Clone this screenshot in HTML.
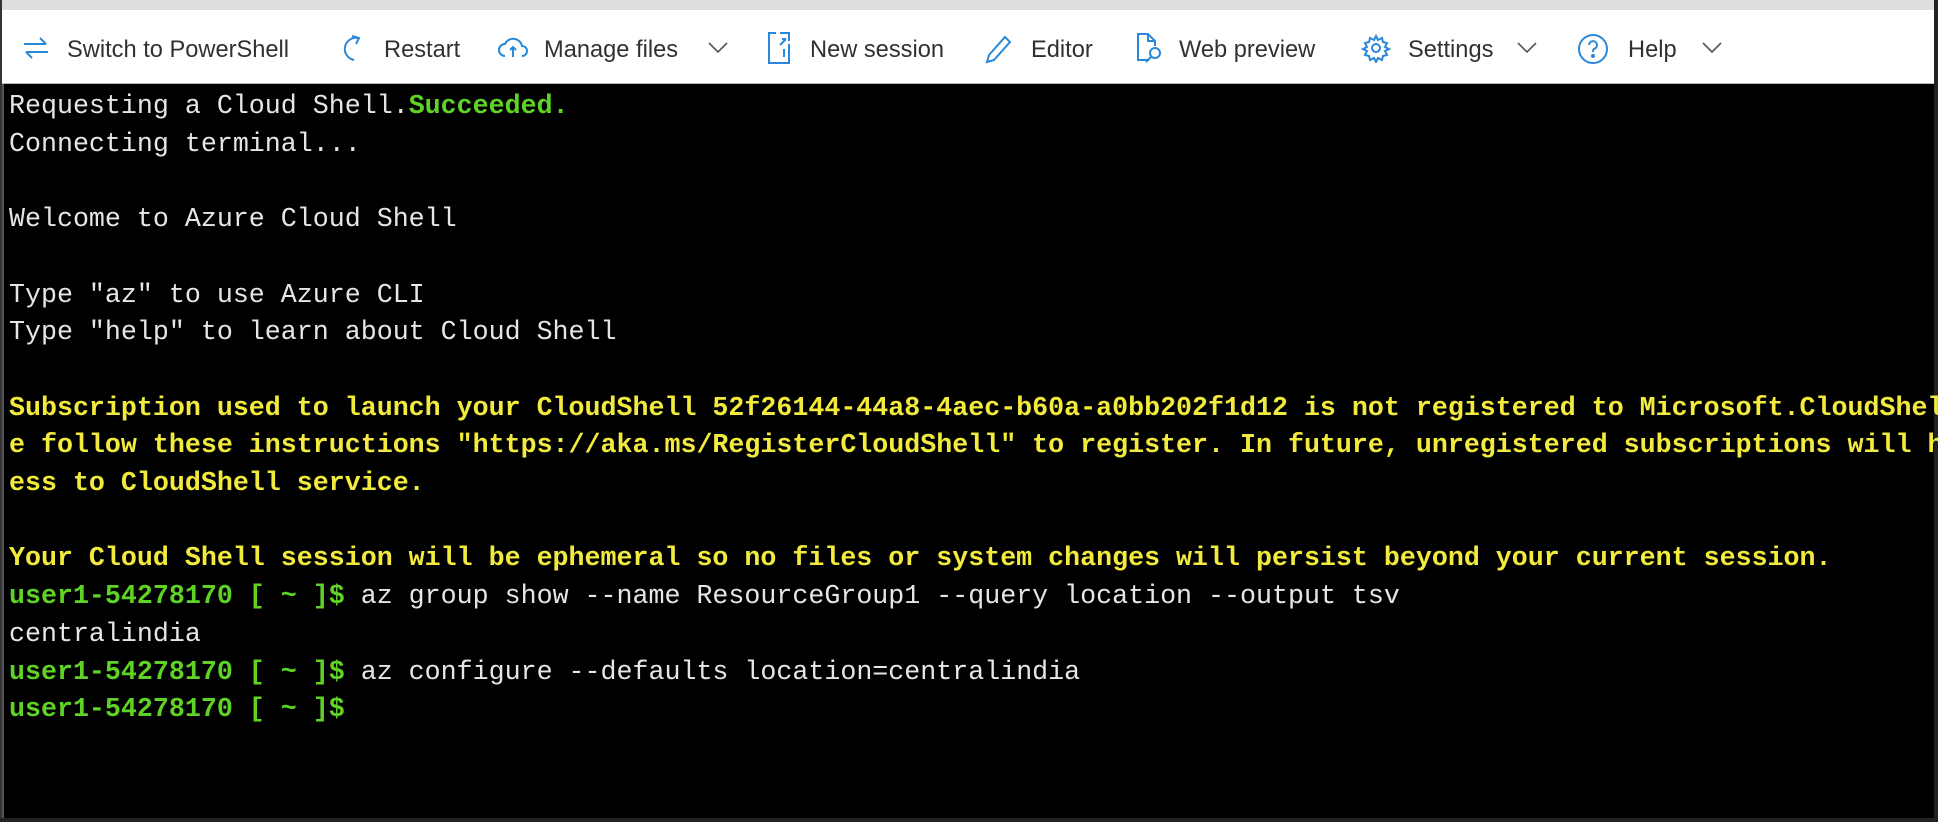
<!DOCTYPE html>
<html><head><meta charset="utf-8"><style>
html,body{margin:0;padding:0;width:1938px;height:822px;overflow:hidden;background:#fff}
.top{position:absolute;left:0;top:0;width:1938px;height:10px;background:#dddcdf}
.tb{position:absolute;left:0;top:10px;width:1938px;height:73px;background:#fff;border-bottom:1px solid #bbb}
.t{position:absolute;top:35px;font:24px "Liberation Sans",sans-serif;color:#323130;white-space:nowrap;line-height:30px;transform:scaleX(0.985);transform-origin:left center}
.ic{position:absolute;top:34px}
.term{position:absolute;left:2px;top:84px;width:1932px;height:734px;background:#000;border-left:2px solid #555;}
.bl{position:absolute;left:0;top:0;width:2px;height:822px;background:#333}
.br{position:absolute;right:0;top:0;width:4px;height:822px;background:#222}
.bb{position:absolute;left:0;bottom:0;width:1938px;height:4px;background:#222}
pre{margin:0;position:absolute;left:9px;top:89px;font:26.65px/37.7px "Liberation Mono",monospace;color:#e6e6e6;white-space:pre}
.g{color:#5fd325;font-weight:bold}
.y{color:#f2ea3c;font-weight:bold}
</style></head><body>
<div class="top"></div>
<div class="tb"></div>
<svg class="ic" style="left:22px" width="28" height="28" viewBox="0 0 28 28" fill="none" stroke="#2b88d8" stroke-width="2"><path d="M2 10h22M18 4l6 6M26 18H4M10 24l-6-6"/></svg>
<div class="t" style="left:67px">Switch to PowerShell</div>
<svg class="ic" style="left:340px" width="28" height="30" viewBox="0 0 28 30" fill="none" stroke="#2b88d8" stroke-width="2"><path d="M18 4a11 11 0 1 0-4 22"/><path d="M12 2l7 2-3 6"/></svg>
<div class="t" style="left:384px">Restart</div>
<svg class="ic" style="left:497px" width="32" height="28" viewBox="0 0 32 28" fill="none" stroke="#2b88d8" stroke-width="2"><path d="M8 22a6 6 0 0 1 0-12 9 9 0 0 1 17 2 5 5 0 0 1 0 10"/><path d="M13 16l3-3 3 3M16 13v10"/></svg>
<div class="t" style="left:544px">Manage files</div>
<svg class="ic" style="left:707px;top:41px" width="22" height="14" viewBox="0 0 22 14" fill="none" stroke="#555" stroke-width="1.6"><path d="M2 2l9 9 9-9"/></svg>
<svg class="ic" style="left:766px;top:31px" width="28" height="34" viewBox="0 0 28 34" fill="none" stroke="#2b88d8" stroke-width="2"><path d="M10 2H3v30h20V13M14 2h9v8M14 14l6-6M20 8h-4M18 18v8"/></svg>
<div class="t" style="left:810px">New session</div>
<svg class="ic" style="left:985px" width="28" height="30" viewBox="0 0 28 30" fill="none" stroke="#2b88d8" stroke-width="2"><path d="M20 3l5 5L9 26l-7 2 2-7z"/></svg>
<div class="t" style="left:1031px">Editor</div>
<svg class="ic" style="left:1135px;top:32px" width="30" height="32" viewBox="0 0 30 32" fill="none" stroke="#2b88d8" stroke-width="2"><path d="M14 28H3V2h10l7 7v5M13 2v7h7"/><circle cx="20" cy="21" r="5"/><path d="M16 25l-5 5"/></svg>
<div class="t" style="left:1179px">Web preview</div>
<svg class="ic" style="left:1361px;top:33px" width="30" height="30" viewBox="0 0 30 30" fill="none" stroke="#2b88d8" stroke-width="2"><circle cx="15" cy="15" r="4"/><path d="M15 3l2 4 4-2 1 4 4 1-2 4 4 2-4 2 2 4-4 1-1 4-4-2-2 4-2-4-4 2-1-4-4-1 2-4-4-2 4-2-2-4 4-1 1-4 4 2z"/></svg>
<div class="t" style="left:1408px">Settings</div>
<svg class="ic" style="left:1516px;top:41px" width="22" height="14" viewBox="0 0 22 14" fill="none" stroke="#555" stroke-width="1.6"><path d="M2 2l9 9 9-9"/></svg>
<svg class="ic" style="left:1577px;top:33px" width="32" height="32" viewBox="0 0 32 32" fill="none" stroke="#2b88d8" stroke-width="2"><circle cx="16" cy="16" r="14"/><path d="M12 12a4 4 0 1 1 5 4c-1 .5-1 1.5-1 3"/><circle cx="16" cy="23" r="1" fill="#2b88d8"/></svg>
<div class="t" style="left:1628px">Help</div>
<svg class="ic" style="left:1701px;top:41px" width="22" height="14" viewBox="0 0 22 14" fill="none" stroke="#555" stroke-width="1.6"><path d="M2 2l9 9 9-9"/></svg>
<div class="term"></div>
<div class="bl"></div><div class="br"></div><div class="bb"></div>
<pre>Requesting a Cloud Shell.<span class="g">Succeeded.</span>
Connecting terminal...

Welcome to Azure Cloud Shell

Type "az" to use Azure CLI
Type "help" to learn about Cloud Shell

<span class="y">Subscription used to launch your CloudShell 52f26144-44a8-4aec-b60a-a0bb202f1d12 is not registered to Microsoft.CloudShel</span>
<span class="y">e follow these instructions "https://aka.ms/RegisterCloudShell" to register. In future, unregistered subscriptions will h</span>
<span class="y">ess to CloudShell service.</span>

<span class="y">Your Cloud Shell session will be ephemeral so no files or system changes will persist beyond your current session.</span>
<span class="g">user1-54278170 [ ~ ]$</span> az group show --name ResourceGroup1 --query location --output tsv
centralindia
<span class="g">user1-54278170 [ ~ ]$</span> az configure --defaults location=centralindia
<span class="g">user1-54278170 [ ~ ]$</span></pre>
</body></html>
